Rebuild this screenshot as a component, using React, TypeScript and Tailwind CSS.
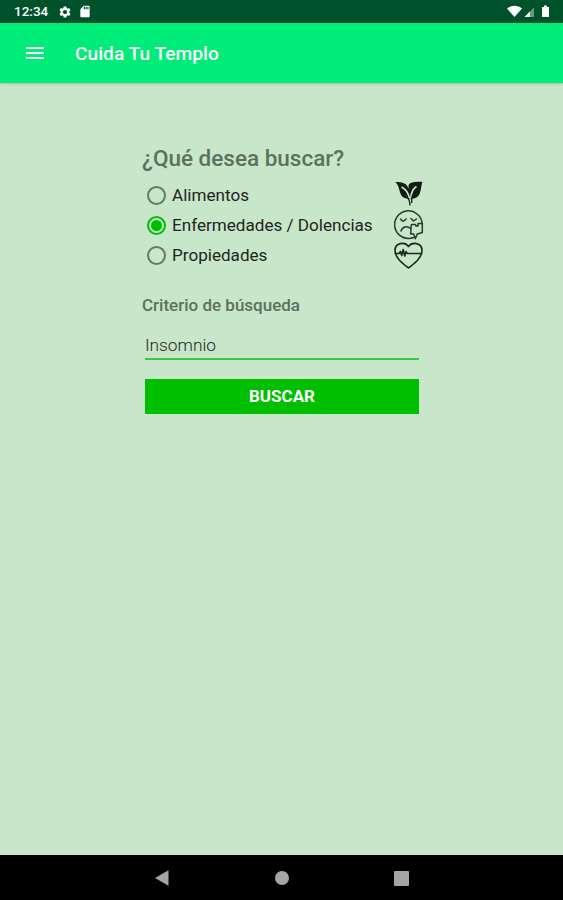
import { useState } from 'react';
import { MdMenu, MdSdCard, MdSettings } from 'react-icons/md';

function LeafIcon() {
  return (
    <svg viewBox="0 0 30 30" className="h-[30px] w-[30px]" fill="#101c12">
      <path d="M1.200 2C6 1.800 11.500 2.500 13.500 6.500l1.300 3C14 6 14.500 3.500 18 2.500c3-.8 7-.8 10.500-.5C26.500 5 28 16 21 18.300l-3.500.5-3-.3C7 19 6.200 13 5 8.500 4.300 5.800 3 3.500 1.200 2z" />
      <path
        d="M7.500 7c4 2 6.700 5.500 7.800 11M22.500 6.500c-3.700 2-5.300 5-5.800 12"
        fill="none"
        stroke="#c8e6c9"
        strokeWidth="1.700"
      />
      <path d="M12 16.800c2.500.8 3.800 3.200 4 8.700M18.300 16c-.6 2-.8 4.500-.6 7" fill="none" stroke="#101c12" strokeWidth="1.300" />
    </svg>
  );
}

function SickFaceIcon() {
  return (
    <svg
      viewBox="0 0 30 30"
      className="h-[30px] w-[30px]"
      fill="none"
      stroke="#263a2a"
      strokeWidth="1.500"
      strokeLinecap="round"
      strokeLinejoin="round"
    >
      <path d="M19.500 27.500A13.800 13.800 0 1 1 28.200 14" />
      <path d="M6.500 9l1.800 2h1.500l2.400-2M17 8.500l2.500 2.500 3-2" />
      <path d="M7 21c1.500-4.500 6-5.500 9.500-2.500" />
      <path d="M17.500 14.500h4l.5 1.500h2V13.500h4.300v9l-5 1.500-2 4.800-1.600-4.800h-3l.3-4.500v-3z" />
    </svg>
  );
}

function HeartIcon() {
  return (
    <svg
      viewBox="0 0 30 30"
      className="h-[30px] w-[30px]"
      fill="none"
      stroke="#18291b"
      strokeWidth="1.600"
      strokeLinecap="round"
      strokeLinejoin="round"
    >
      <path d="M14.500 28C9 23.500 1 18 1 10.500 1 2.500 11 1.500 14.500 6.500 18 1.500 28 2.500 28 10.500c0 7.500-8 13-13.500 17.500z" />
      <path d="M1.500 13.500h3.500l1.500-2 1.200 4 1.500-6 1.500 6.500 1.400-4.500 1 2H27.500" />
    </svg>
  );
}

const options = [
  { id: 'alimentos', label: 'Alimentos', icon: LeafIcon },
  { id: 'enfermedades', label: 'Enfermedades / Dolencias', icon: SickFaceIcon },
  { id: 'propiedades', label: 'Propiedades', icon: HeartIcon },
];

function StatusBar() {
  return (
    <div className="flex h-[23px] items-center bg-[#00522b] pr-[12px] pl-[14px] text-white">
      <span className="w-[35px] text-[13.500px] leading-none font-medium">12:34</span>
      <MdSettings className="ml-[9px] h-[14px] w-[14px]" />
      <MdSdCard className="ml-[6px] h-[15px] w-[14px]" />
      <svg viewBox="0 0 44 14" className="ml-auto h-[14px] w-[44px]" fill="#fff">
        <path d="M0 3.500C4.500-.2 10.500-.2 15 3.500L7.500 12z" />
        <path d="M17.500 12L27 2.500V12z" opacity=".4" />
        <path d="M17.500 12l5.500-5.500V12z" />
        <path d="M35 2h2V.5h3V2h2v10h-7z" />
      </svg>
    </div>
  );
}

function NavigationBar() {
  return (
    <div className="flex h-[45px] items-center justify-between bg-black pt-px pr-[154px] pl-[155px]">
      <svg viewBox="0 0 14 16" className="h-4 w-[14px]" fill="#a5a5a5">
        <path d="M0 8L13.500.3v15.400z" />
      </svg>
      <div className="h-[14px] w-[14px] rounded-full bg-[#a5a5a5]" />
      <div className="h-[15px] w-[15px] rounded-[1px] bg-[#a5a5a5]" />
    </div>
  );
}

export default function App() {
  const [selected, setSelected] = useState('enfermedades');
  const [query, setQuery] = useState('Insomnio');

  return (
    <div className="flex h-[900px] w-[563px] flex-col overflow-hidden bg-[#c8e6c9] font-[Roboto,sans-serif]">
      <StatusBar />

      <header className="flex h-[60px] items-center bg-[#00ec78] pl-[23px] text-white shadow-[0_1px_2px_rgba(0,0,0,0.2)]">
        <MdMenu className="h-6 w-6" />
        <h1 className="ml-[28px] pt-px text-[19.200px] leading-6 font-medium">Cuida Tu Templo</h1>
      </header>

      <main className="flex-1 pt-[60px] pl-[142px]">
        <h2 className="text-[22.500px] leading-[30px] font-medium text-[#5c705e]">¿Qué desea buscar?</h2>

        <div className="mt-[7px] w-[282px]">
          {options.map(({ id, label, icon: Icon }) => (
            <button
              key={id}
              role="radio"
              aria-checked={selected === id}
              onClick={() => setSelected(id)}
              className="flex h-[30px] w-full items-center pl-[5px]"
            >
              <span
                className={
                  selected === id
                    ? 'flex h-[19px] w-[19px] items-center justify-center rounded-full border-2 border-[#00bf00]'
                    : 'h-[19px] w-[19px] rounded-full border-2 border-[#637a65]'
                }
              >
                {selected === id && <span className="h-[11px] w-[11px] rounded-full bg-[#00bf00]" />}
              </span>
              <span className="ml-[6px] text-[17.100px] leading-[28px] whitespace-nowrap text-[#1d251e]">
                {label}
              </span>
              <span className="ml-auto">
                <Icon />
              </span>
            </button>
          ))}
        </div>

        <label htmlFor="criterio" className="mt-[25px] block text-[17px] leading-[20px] font-medium text-[#5c705e]">
          Criterio de búsqueda
        </label>
        <input
          id="criterio"
          value={query}
          onChange={(e) => setQuery(e.target.value)}
          className="mt-[16px] ml-[3px] block h-[29px] w-[274px] border-b-2 border-[#3cc643] bg-transparent pt-px text-[17.300px] font-light text-[#1d251e] outline-none"
        />
        <button className="mt-[19px] ml-[3px] block h-[35px] w-[274px] bg-[#00bf00] pt-px text-[17px] font-bold text-white">
          BUSCAR
        </button>
      </main>

      <NavigationBar />
    </div>
  );
}
